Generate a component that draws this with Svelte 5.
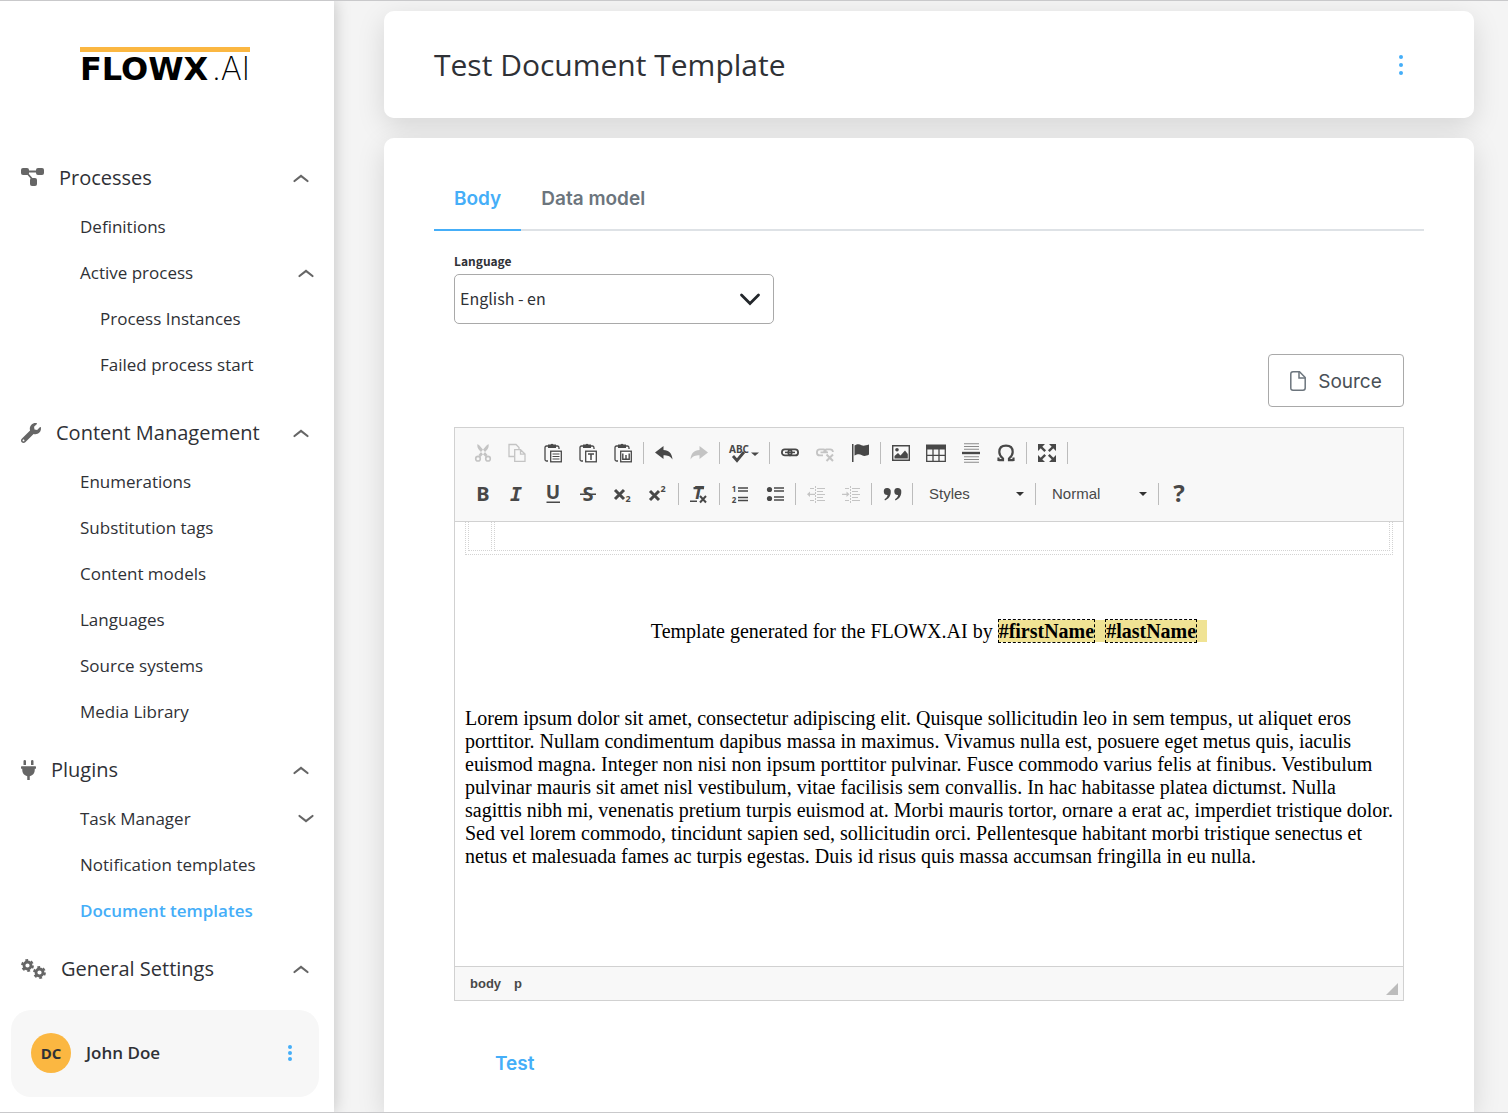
<script>
  const groups = [
    {
      label: 'Processes', icon: 'flow', w: 23,
      items: [
        { label: 'Definitions' },
        { label: 'Active process', chevron: 'up', children: ['Process Instances', 'Failed process start'] },
      ],
    },
    {
      label: 'Content Management', icon: 'wrench', w: 20,
      items: ['Enumerations', 'Substitution tags', 'Content models', 'Languages', 'Source systems', 'Media Library'].map((label) => ({ label })),
    },
    {
      label: 'Plugins', icon: 'plug', w: 15,
      items: [
        { label: 'Task Manager', chevron: 'down' },
        { label: 'Notification templates' },
        { label: 'Document templates', active: true },
      ],
    },
    { label: 'General Settings', icon: 'gears', w: 25, items: [] },
  ];

  const clip =
    '<path d="M5 3H3.5Q2 3 2 4.500V16.500Q2 18 3.500 18H5M13 3H14.500Q16 3 16 5V6" fill="none" stroke="currentColor" stroke-width="1.300"/><path d="M5 1.500H7.500Q9 0 10.500 1.500H13V5H5Z"/><rect x="7.700" y="8.200" width="10.600" height="10.600" fill="#fff" stroke="currentColor" stroke-width="1.300"/>';
  const letter = (t, x, y, size, extra = '') =>
    `<text x="${x}" y="${y}" font-size="${size}" font-weight="700" text-anchor="middle" ${extra}>${t}</text>`;
  const chainLink = 'fill="none" stroke="currentColor" stroke-width="1.800"';

  const art = {
    cut: '<path d="M4.500 1Q3.500 4.500 7 8L12.500 14L14.500 12L6.500 2.500ZM15.500 1Q16.500 4.500 13 8L7.500 14L5.500 12L13.500 2.500Z"/><circle cx="5" cy="15.700" r="2.300" fill="none" stroke="currentColor" stroke-width="1.600"/><circle cx="15" cy="15.700" r="2.300" fill="none" stroke="currentColor" stroke-width="1.600"/>',
    copy: '<path d="M6 13.500H1V1.500H8L11 4.500V6M6.700 6.700H12.500L17 11V18.300H6.700Z M12.500 7V11.200H17" fill="none" stroke="currentColor" stroke-width="1.300"/>',
    paste: clip + '<path d="M9.500 11H16.500M9.500 13.500H16.500M9.500 16H16.500" stroke="currentColor" stroke-width="1.200"/>',
    pasteText: clip + '<path d="M10 11H16M13 11V17" stroke="currentColor" stroke-width="1.500"/>',
    pasteWord: clip + '<path d="M9.800 10.500V16.200H16.200V10.500M13 12V16" fill="none" stroke="currentColor" stroke-width="1.400"/>',
    undo: '<path d="M1 9.500L9.500 3V7C15 7 18 10.500 18.500 16.500C16 13 13.500 12.300 9.500 12.300V16Z"/>',
    redo: '<path d="M19 9.500L10.500 3V7C5 7 2 10.500 1.500 16.500C4 13 6.500 12.300 10.500 12.300V16Z"/>',
    link: `<rect x="1.900" y="6.400" width="9.800" height="6" rx="3" ${chainLink}/><rect x="8.300" y="6.400" width="9.800" height="6" rx="3" ${chainLink}/><path d="M5 9.400H15" stroke="currentColor" stroke-width="1.500"/>`,
    unlink: `<path d="M8 12.400H4.900A3 3 0 0 1 4.900 6.400H8.700A3 3 0 0 1 11 9.400M18 9A3 3 0 0 0 15 6.400H11.500A3 3 0 0 0 9 9.400M5.500 9.400H13" ${chainLink}/><path d="M11.500 11.500L18 18M18 11.500L11.500 18" stroke="currentColor" stroke-width="2"/>`,
    flag: '<path d="M2 1H3.500V19H2ZM4.500 2.500C7.500 .5 9.500 1 11.500 2.200C13.500 3.200 15.500 2.500 19 1.500V11.500C15.500 13.500 13.500 13 11.500 12C9.500 11 7.500 11 4.500 12.500Z"/>',
    image: '<path d="M1.700 2.700H18.300V17.300H1.700Z" fill="none" stroke="currentColor" stroke-width="1.400"/><circle cx="6" cy="6.800" r="1.800"/><path d="M3.500 15.500V13L7 10L9.500 12.500L14 7.500L16.800 11V15.500Z"/>',
    table: '<path d="M0 1.500H20V6.500H0Z"/><path d="M.7 6V18.300H19.300V6M.7 12.300H19.300M7 6V18M13 6V18" fill="none" stroke="currentColor" stroke-width="1.300"/>',
    rule: '<path d="M3 .7H18M3 3.500H18M3 6.200H18M3 13.800H18M3 16.500H18M3 19.300H18" stroke="#8a8a8a" stroke-width="1.100"/><path d="M1 8.800H19V11.200H1Z"/>',
    omega: '<path d="M2.500 17.200H7V15.500C4.500 13.500 3.300 11.500 3.300 9C3.300 5 6 2.700 10 2.700S16.700 5 16.700 9C16.700 11.500 15.500 13.500 13 15.500V17.200H17.500M2.500 14.500V18M17.500 14.500V18" fill="none" stroke="currentColor" stroke-width="2.200"/>',
    maximize: '<path d="M1 1H8L1 8ZM19 1V8L12 1ZM1 19V12L8 19ZM19 19H12L19 12Z"/><path d="M3 3L8.200 8.200M17 3L11.800 8.200M3 17L8.200 11.800M17 17L11.800 11.800" stroke="currentColor" stroke-width="2.400"/>',
    bold: letter('B', 10, 17, 20),
    italic: letter('I', 8, 17, 20, 'font-style="italic" style="font-family:\'DejaVu Sans Mono\',monospace"'),
    underline: letter('U', 10, 15, 19) + '<path d="M3.500 17.500H17V19H3.500Z"/>',
    strike: letter('S', 10, 17, 20) + '<path d="M2 9.500H18V11H2Z"/>',
    sub: '<path d="M2 6L11 15M11 6L2 15" stroke="currentColor" stroke-width="3"/>' + letter('2', 15, 18, 9),
    sup: '<path d="M2 7L11 16M11 7L2 16" stroke="currentColor" stroke-width="3"/>' + letter('2', 15, 8, 9),
    clear: letter('T', 9, 15, 18, 'font-style="italic"') + '<path d="M1 16.500H8V18H1ZM4.500 3H15V5.200H4.500Z"/><path d="M11 12L17 18.500M17 12L11 18.500" stroke="currentColor" stroke-width="2"/>',
    ordered: letter('1', 4, 8, 8) + letter('2', 4, 19, 8) + '<path d="M8 4H18M8 7H18M8 13.500H18M8 16.500H18" stroke="currentColor" stroke-width="1.300"/>',
    bullets: '<circle cx="4.500" cy="5.500" r="2.600"/><circle cx="4.500" cy="14.500" r="2.600"/><path d="M9 4H19M9 7H19M9 13H19M9 16H19" stroke="currentColor" stroke-width="1.400"/>',
    outdent: '<path d="M1 10.300L4 7.500V9.700H9V11H4V13Z"/><path d="M9.500 2V19" stroke="currentColor" stroke-dasharray="2 1"/><path d="M11 4.500H19M11 7.500H17M11 10.500H19M11 13.500H17M11 16.500H19M4 4.500H8M4 16.500H8" stroke="currentColor" stroke-width="1.100"/>',
    indent: '<path d="M8.500 10.300L5.500 7.500V9.700H1V11H5.500V13Z"/><path d="M9.500 2V19" stroke="currentColor" stroke-dasharray="2 1"/><path d="M11 4.500H19M11 7.500H17M11 10.500H19M11 13.500H17M11 16.500H19M4 4.500H8M4 16.500H8" stroke="currentColor" stroke-width="1.100"/>',
    quote: '<path d="M5 4A3.500 3.500 0 0 1 8.800 8C8.800 12 6.500 15 3 16.500L2.500 15.200C4.500 14 5.500 12.500 5.600 11A3.500 3.500 0 1 1 5 4ZM15.500 4A3.500 3.500 0 0 1 19.300 8C19.300 12 17 15 13.500 16.500L13 15.200C15 14 16 12.500 16.100 11A3.500 3.500 0 1 1 15.500 4Z"/>',
    help: letter('?', 10, 18, 24),
  };

  const rows = [
    [
      ['cut', 'Cut', true], ['copy', 'Copy', true], ['paste', 'Paste'], ['pasteText', 'Paste as plain text'], ['pasteWord', 'Paste from Word'], 0,
      ['undo', 'Undo'], ['redo', 'Redo', true], 0, 'spell', 0,
      ['link', 'Link'], ['unlink', 'Unlink', true], ['flag', 'Anchor'], 0,
      ['image', 'Image'], ['table', 'Table'], ['rule', 'Insert horizontal line'], ['omega', 'Insert special character'], 0,
      ['maximize', 'Maximize'], 0,
    ],
    [
      ['bold', 'Bold'], ['italic', 'Italic'], ['underline', 'Underline'], ['strike', 'Strikethrough'], ['sub', 'Subscript'], ['sup', 'Superscript'], 0,
      ['clear', 'Remove format'], 0, ['ordered', 'Numbered list'], ['bullets', 'Bulleted list'], 0,
      ['outdent', 'Decrease indent', true], ['indent', 'Increase indent', true], 0, ['quote', 'Block quote'], 0,
      { combo: 'Styles' }, 0, { combo: 'Normal' }, 0, ['help', 'About'],
    ],
  ];
</script>

{#snippet chevron(dir)}
  <svg class="chevron" class:down={dir === 'down'} width="16" height="10" viewBox="0 0 16 10" aria-hidden="true">
    <path d="M1.500 8L8 3L14.500 8" fill="none" stroke="#666" stroke-width="2.200" stroke-linecap="round" />
  </svg>
{/snippet}

{#snippet dots(h)}
  <svg width="6" height={h} viewBox="0 0 6 {h}" aria-hidden="true" fill="#45aef8">
    <circle cx="3" cy="3" r="2" /><circle cx="3" cy={h / 2} r="2" /><circle cx="3" cy={h - 3} r="2" />
  </svg>
{/snippet}

{#snippet navIcon(name, w)}
  <svg width={w} height="20" viewBox={name === 'wrench' ? '0 0 512 512' : name === 'plug' ? '0 0 384 512' : `0 0 ${w} 20`} fill="#666" aria-hidden="true">
    {#if name === 'flow'}
      <rect x="0" y="0" width="8" height="7" rx="2" /><rect x="15" y="0" width="8" height="7" rx="2" /><rect x="9" y="10" width="7" height="8" rx="2" />
      <path d="M6 3.500H17M6 5L12 12" stroke="#666" stroke-width="1.800" />
    {:else if name === 'wrench'}
      <path d="M507.730 109.100c-2.240-9.030-13.540-12.090-20.120-5.510l-74.360 74.360-67.880-11.310-11.310-67.880 74.360-74.360c6.620-6.620 3.430-17.900-5.660-20.160-47.380-11.740-99.550.91-136.580 37.930-39.640 39.640-50.550 97.100-34.050 147.200L18.740 402.760c-24.990 24.990-24.990 65.510 0 90.500 24.990 24.990 65.510 24.990 90.500 0l213.210-213.210c50.120 16.710 107.470 5.680 147.370-34.220 37.070-37.070 49.700-89.320 37.910-136.730zM64 472c-13.250 0-24-10.750-24-24 0-13.260 10.750-24 24-24s24 10.740 24 24c0 13.250-10.750 24-24 24z" />
    {:else if name === 'plug'}
      <path d="M320 32a32 32 0 0 0-64 0v96h64zm48 128H16A16 16 0 0 0 0 176v32a16 16 0 0 0 16 16h16v32a160 160 0 0 0 128 156.800V512h64v-99.200A160 160 0 0 0 352 256v-32h16a16 16 0 0 0 16-16v-32a16 16 0 0 0-16-16zM128 32a32 32 0 0 0-64 0v96h64z" />
    {:else}
      <g fill="none" stroke="#666">
        <circle cx="6.500" cy="6.500" r="3.500" stroke-width="2.800" /><circle cx="6.500" cy="6.500" r="5.400" stroke-width="2" stroke-dasharray="2.800 2.855" />
        <circle cx="18.500" cy="13.500" r="3.500" stroke-width="2.800" /><circle cx="18.500" cy="13.500" r="5.400" stroke-width="2" stroke-dasharray="2.800 2.855" />
      </g>
    {/if}
  </svg>
{/snippet}

<div class="shell">
  <aside class="sidebar">
    <div class="brand"><strong>FLOWX</strong><span>.AI</span></div>
    <nav>
      {#each groups as g}
        <section class="group">
          <button class="group-head">
            {@render navIcon(g.icon, g.w)}
            <span>{g.label}</span>
            {@render chevron('up')}
          </button>
          {#if g.items.length}
            <ul>
              {#each g.items as item}
                <li>
                  <a href="#top" class:active={item.active}>{item.label}{#if item.chevron}{@render chevron(item.chevron)}{/if}</a>
                  {#if item.children}
                    <ul class="nested">
                      {#each item.children as child}<li><a href="#top">{child}</a></li>{/each}
                    </ul>
                  {/if}
                </li>
              {/each}
            </ul>
          {/if}
        </section>
      {/each}
    </nav>
    <div class="user">
      <span class="avatar">DC</span>
      <span class="name">John Doe</span>
      <button class="more" aria-label="Account menu">{@render dots(18)}</button>
    </div>
  </aside>

  <main>
    <header class="card title">
      <h1>Test Document Template</h1>
      <button class="more" aria-label="Template menu">{@render dots(22)}</button>
    </header>

    <div class="card content">
      <div class="tabs" role="tablist">
        <button role="tab" aria-selected="true" class="on">Body</button>
        <button role="tab" aria-selected="false">Data model</button>
      </div>

      <div class="panel">
        <label for="language">Language</label>
        <div class="select">
          <select id="language"><option>English - en</option></select>
          <svg width="20" height="13" viewBox="0 0 20 13" aria-hidden="true"><path d="M1.500 2L10 10.500L18.500 2" fill="none" stroke="#23272b" stroke-width="2.800" stroke-linecap="round" /></svg>
        </div>

        <button class="source">
          <svg width="16" height="20" viewBox="0 0 16 20" fill="none" stroke="#6c757d" stroke-width="1.500" aria-hidden="true">
            <path d="M3 .8H9.500L15.200 6.500V17Q15.200 19.200 13 19.200H3Q.8 19.200 .8 17V3Q.8 .8 3 .8Z" /><path d="M9 1V7H15" />
          </svg>
          Source
        </button>

        <div class="editor">
          <div class="toolbar">
            {#each rows as row}
              <div class="row">
                {#each row as t}
                  {#if t === 0}
                    <span class="sep"></span>
                  {:else if t === 'spell'}
                    <button class="tool spell" aria-label="Spell check">
                      <svg width="32" height="20" viewBox="0 0 32 20" fill="currentColor" aria-hidden="true">
                        <text x="1" y="10" font-size="10" font-weight="700">ABC</text>
                        <path d="M5 13L9 17.500L16 9" fill="none" stroke="currentColor" stroke-width="2.800" />
                        <path d="M23 9.500H31L27 13Z" />
                      </svg>
                    </button>
                  {:else if t.combo}
                    <span class="combo">
                      <select aria-label={t.combo}><option>{t.combo}</option></select>
                      <svg width="8" height="4" viewBox="0 0 8 4" fill="#333" aria-hidden="true"><path d="M0 0H8L4 4Z" /></svg>
                    </span>
                  {:else}
                    <button class="tool" disabled={t[2]} aria-label={t[1]}>
                      <svg width="20" height="20" viewBox="0 0 20 20" fill="currentColor" aria-hidden="true">{@html art[t[0]]}</svg>
                    </button>
                  {/if}
                {/each}
              </div>
            {/each}
          </div>

          <div class="document">
            <table><tbody><tr><td class="narrow"></td><td></td></tr></tbody></table>
            <p class="lead">Template generated for the FLOWX.AI by <mark><b>#firstName</b>&nbsp;&nbsp;<b>#lastName</b>&nbsp;&nbsp;</mark></p>
            <p>Lorem ipsum dolor sit amet, consectetur adipiscing elit. Quisque sollicitudin leo in sem tempus, ut aliquet eros porttitor. Nullam condimentum dapibus massa in maximus. Vivamus nulla est, posuere eget metus quis, iaculis euismod magna. Integer non nisi non ipsum porttitor pulvinar. Fusce commodo varius felis at finibus. Vestibulum pulvinar mauris sit amet nisl vestibulum, vitae facilisis sem convallis. In hac habitasse platea dictumst. Nulla sagittis nibh mi, venenatis pretium turpis euismod at. Morbi mauris tortor, ornare a erat ac, imperdiet tristique dolor. Sed vel lorem commodo, tincidunt sapien sed, sollicitudin orci. Pellentesque habitant morbi tristique senectus et netus et malesuada fames ac turpis egestas. Duis id risus quis massa accumsan fringilla in eu nulla.</p>
          </div>

          <div class="status">
            <span>body</span><span>p</span>
            <svg width="12" height="12" viewBox="0 0 12 12" aria-hidden="true"><path d="M12 0V12H0Z" fill="#bcbcbc" /></svg>
          </div>
        </div>

        <button class="test">Test</button>
      </div>
    </div>
  </main>
</div>

<style>
  :global(body) { margin: 0; }
  .shell, .shell * { box-sizing: border-box; }
  .shell {
    display: flex;
    height: 100vh;
    overflow: hidden;
    border-top: 1px solid #c9c9cb;
    border-bottom: 1px solid #c9c9cb;
    background: #f4f4f4;
    color: #2f3136;
    font-family: "Open Sans", sans-serif;
  }
  button { margin: 0; padding: 0; border: 0; background: none; color: inherit; font-family: inherit; cursor: pointer; }
  svg { display: block; flex: none; overflow: visible; }
  ul { margin: 0; padding: 0; list-style: none; }

  .sidebar {
    position: relative;
    z-index: 0;
    display: flex;
    flex: none;
    flex-direction: column;
    width: 334px;
    padding-top: 46px;
    background: #fff;
    box-shadow: 0 0 16px rgba(0, 0, 0, 0.22);
  }
  .brand {
    display: flex;
    align-items: baseline;
    justify-content: space-between;
    width: 170px;
    height: 34px;
    margin: 0 0 71px 80px;
    border-top: 5px solid #fbb741;
    color: #000;
    line-height: 34px;
    white-space: nowrap;
  }
  .brand strong { font-family: "DejaVu Sans", sans-serif; font-size: 32px; font-weight: 700; }
  .brand span { font-family: Inter, sans-serif; font-size: 32px; font-weight: 200; }
  .group { margin-bottom: 9px; }
  .group-head {
    display: flex;
    align-items: center;
    gap: 15px;
    width: 100%;
    height: 52px;
    padding: 0 25px 0 21px;
    font-size: 20px;
    line-height: 28px;
  }
  .chevron { margin-left: auto; }
  .down { transform: rotate(180deg); }
  .group a {
    display: flex;
    align-items: center;
    height: 46px;
    padding: 0 20px 0 80px;
    color: inherit;
    font-size: 17px;
    line-height: 24px;
    text-decoration: none;
  }
  .group .nested a { padding-left: 100px; }
  .nested { padding-bottom: 10px; }
  .group a.active { color: #45aef8; font-weight: 600; }
  .user {
    display: flex;
    align-items: center;
    height: 87px;
    margin: auto 15px 15px 11px;
    padding: 0 26px 2px 20px;
    border-radius: 20px;
    background: #f7f7f7;
    font-weight: 600;
  }
  .avatar {
    width: 40px;
    margin-right: 15px;
    border-radius: 50%;
    background: #fbb741;
    font-size: 15px;
    font-weight: 700;
    line-height: 40px;
    text-align: center;
  }
  .name { font-size: 17px; }
  .more { margin-left: auto; }

  main {
    display: flex;
    flex: 1;
    flex-direction: column;
    gap: 20px;
    min-width: 0;
    padding: 10px 34px 0 50px;
    isolation: isolate;
  }
  .card { position: relative; border-radius: 10px; background: #fff; }
  .card::before {
    content: "";
    position: absolute;
    inset: 0;
    z-index: -1;
    border-radius: 10px;
    box-shadow: 0 8px 28px rgba(0, 0, 0, 0.13);
  }
  .title { display: flex; flex: none; align-items: center; height: 107px; padding: 0 70px 0 50px; }
  h1 { margin: 0; font-size: 30px; font-weight: 400; line-height: 40px; }
  .content { flex: 1; padding: 30px 50px 0; border-radius: 10px 10px 0 0; }
  .tabs { display: flex; border-bottom: 2px solid #dee2e6; }
  .tabs button {
    height: 63px;
    margin-bottom: -2px;
    padding: 0 20px;
    border-bottom: 2px solid transparent;
    color: #6c757d;
    font-family: Inter, sans-serif;
    font-size: 19px;
    font-weight: 600;
  }
  .tabs .on { border-color: #45aef8; color: #45aef8; }

  .panel { display: flex; flex-direction: column; padding: 20px 20px 0; }
  label { font-family: "Noto Sans CJK SC", sans-serif; font-size: 12px; font-weight: 700; line-height: 20px; }
  .select { display: flex; align-items: center; width: 320px; margin-top: 3px; }
  .select select {
    width: 100%;
    height: 50px;
    padding: 0 5px 2px;
    border: 1px solid #a9a9a9;
    border-radius: 5px;
    appearance: none;
    background: #fff;
    color: inherit;
    font-family: "Noto Sans CJK SC", sans-serif;
    font-size: 16px;
  }
  .select svg { margin-left: -34px; pointer-events: none; }
  .source {
    display: flex;
    align-items: center;
    align-self: flex-end;
    justify-content: center;
    gap: 12px;
    width: 136px;
    height: 53px;
    margin: 30px 0 20px;
    padding-top: 1px;
    border: 1px solid #a9a9a9;
    border-radius: 4px;
    color: #495057;
    font-family: Inter, sans-serif;
    font-size: 19px;
  }

  .editor { border: 1px solid #d1d1d1; }
  .toolbar { padding: 4px 10px 7px; border-bottom: 1px solid #d1d1d1; background: #f8f8f8; }
  .row { display: flex; align-items: center; height: 41px; }
  .tool { display: flex; align-items: center; justify-content: center; width: 35px; height: 35px; color: #484848; font-family: "Noto Sans", sans-serif; }
  .tool:disabled { color: #c4c4c4; }
  .spell { width: 44px; }
  .sep { width: 1px; height: 22px; margin: 0 2px 0 3px; background: #bcbcbc; }
  .combo { display: flex; align-items: center; width: 117px; }
  .combo select {
    width: 100%;
    height: 30px;
    padding: 0 14px;
    border: 0;
    appearance: none;
    background: none;
    color: #484848;
    font-family: "Liberation Sans", sans-serif;
    font-size: 15px;
  }
  .combo svg { margin-left: -16px; pointer-events: none; }

  .document {
    height: 444px;
    overflow: hidden;
    padding: 0 10px;
    color: #000;
    font-family: "Liberation Serif", serif;
    font-size: 20px;
    line-height: 23px;
  }
  table { width: 100%; margin: -21px 0 65px; border: 1px dotted #d3d3d3; border-spacing: 2px 3px; }
  td { height: 46px; padding: 0; border: 1px dotted #d3d3d3; }
  .narrow { width: 24px; }
  p { margin: 0; }
  .lead { margin-bottom: 64px; text-align: center; }
  mark { background: #f0e394; color: inherit; }
  b { border: 1px dashed #000; }
  .status {
    display: flex;
    align-items: center;
    gap: 13px;
    height: 34px;
    padding: 0 5px 0 15px;
    border-top: 1px solid #d1d1d1;
    background: #f8f8f8;
    color: #484848;
    font-family: "Liberation Sans", sans-serif;
    font-size: 13px;
    font-weight: 700;
  }
  .status svg { align-self: flex-end; margin: 0 0 5px auto; }
  .test {
    align-self: flex-start;
    margin-top: 51px;
    padding: 0 41px;
    color: #45aef8;
    font-family: Inter, sans-serif;
    font-size: 19px;
    font-weight: 600;
    line-height: 24px;
  }
</style>
